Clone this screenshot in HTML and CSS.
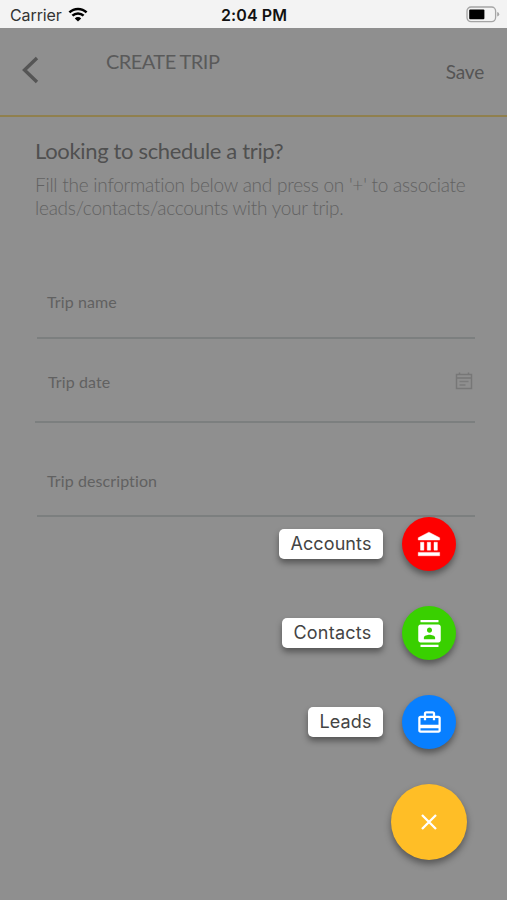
FILE: index.html
```html
<!DOCTYPE html>
<html lang="en">
<head>
<meta charset="utf-8">
<title>Create Trip</title>
<link rel="stylesheet" href="styles.css">
</head>
<body>
<div class="screen">
  <div class="status">
    <div class="carrier"><span class="carrier-name">Carrier</span>
      <svg class="wifi" viewBox="0 0 20 15"><path d="M1.4 5.4A12.4 12.4 0 0 1 18.6 5.4M4.4 8.7A8 8 0 0 1 15.6 8.7" fill="none" stroke="#000" stroke-width="2.5"/><path d="M10 14.5 6.8 11.4a4.6 4.6 0 0 1 6.4 0z"/></svg>
    </div>
    <span class="time">2:04 PM</span>
    <svg class="battery" viewBox="0 0 34 17"><rect x="1" y="1" width="28.6" height="14.6" rx="4" fill="none" stroke="#a5a5a5" stroke-width="1.3"/><rect x="3.2" y="3.4" width="15.2" height="9.8" rx="1" fill="#000"/><path d="M31.2 6v4.6q2-.6 2-2.3t-2-2.3" fill="#a5a5a5"/></svg>
  </div>
  <header class="header">
    <svg class="back" viewBox="0 0 18 28"><path d="M16 2 3.500 14 16 26" fill="none" stroke="#555" stroke-width="3.400"/></svg>
    <h1 class="title">CREATE TRIP</h1>
    <span class="save">Save</span>
  </header>
  <main class="content">
    <h2 class="question">Looking to schedule a trip?</h2>
    <p class="hint">Fill the information below and press on '+' to associate<br>leads/contacts/accounts with your trip.</p>
    <div class="field name"><span>Trip name</span></div>
    <div class="field date"><span>Trip date</span>
      <svg class="calendar" viewBox="0 0 18 18"><path d="M1.500 2.500h15v14h-15zM1.500 6h15M4.500 .5v2M13.500 .5v2" fill="none" stroke="#777" stroke-width="1.500"/><path d="M4.500 9.500h9M4.500 13h6" stroke="#7b7b7b" stroke-width="1.300"/></svg>
    </div>
    <div class="field description"><span>Trip description</span></div>
  </main>
  <div class="actions">
    <div class="action"><span class="label accounts">Accounts</span><span class="round red"><svg viewBox="0 0 24 24"><path d="M4 10v7h3v-7H4zm6 0v7h3v-7h-3zM2 22h19v-3H2v3zm14-12v7h3v-7h-3zm-4.500-9L2 6v2h19V6l-9.500-5z" stroke="#fff" stroke-width=".4"/></svg></span></div>
    <div class="action"><span class="label contacts">Contacts</span><span class="round green"><svg viewBox="0 0 24 24"><path d="M20 0H4v2h16V0zM4 24h16v-2H4v2zM20 4H4c-1.100 0-2 .9-2 2v12c0 1.100.9 2 2 2h16c1.100 0 2-.9 2-2V6c0-1.100-.9-2-2-2zm-8 2.750c1.240 0 2.250 1.010 2.250 2.250s-1.010 2.250-2.250 2.250S9.750 10.240 9.750 9 10.760 6.750 12 6.750zM17 17H7v-1.500c0-1.670 3.330-2.500 5-2.500s5 .83 5 2.500V17z"/></svg></span></div>
    <div class="action"><span class="label leads">Leads</span><span class="round blue"><svg viewBox="0 0 24 24"><path d="M20 6h-3V4c0-1.110-.89-2-2-2H9c-1.110 0-2 .89-2 2v2H4c-1.110 0-2 .89-2 2v11c0 1.110.89 2 2 2h16c1.110 0 2-.89 2-2V8c0-1.110-.89-2-2-2zM9 4h6v2H9V4zm11 15H4v-2h16v2zm0-5H4V8h3v2h2V8h6v2h2V8h3v6z"/></svg></span></div>
    <div class="close"><svg viewBox="0 0 18 18"><path d="M2 2l14 14M16 2 2 16" fill="none" stroke="#fff" stroke-width="2.300"/></svg></div>
  </div>
</div>
</body>
</html>
```

FILE: styles.css
```css
* { box-sizing: border-box; }
body { margin: 0; }
svg { display: block; }
.screen {
  position: relative;
  width: 507px;
  height: 900px;
  overflow: hidden;
  background: #8f8f8f;
  font-family: Lato, sans-serif;
  font-variant-ligatures: none;
}
.status {
  display: grid;
  grid-template-columns: 1fr auto 1fr;
  align-items: center;
  height: 28px;
  padding: 0 7px 0 10px;
  background: #f3f3f3;
  color: #111;
  font-family: Inter, sans-serif;
  font-size: 16px;
}
.carrier { display: flex; align-items: center; gap: 6px; color: #333; }
.carrier-name { letter-spacing: -0.1px; padding-top: 1px; }
.wifi { width: 20px; height: 15px; }
.time { padding-top: 1px; margin-right: 2px; font-weight: 600; letter-spacing: 0.1px; }
.battery { width: 34px; height: 17px; justify-self: end; }
.header {
  display: flex;
  align-items: flex-start;
  height: 89px;
  padding: 0 23px 0 21px;
  border-bottom: 2px solid #90804e;
}
.back { width: 18px; height: 28px; margin-top: 28px; }
.title {
  margin: 20px auto 0 67px;
  color: #5a5a5a;
  font-size: 20px;
  font-weight: 400;
  letter-spacing: -0.55px;
  line-height: 26px;
}
.save { margin-top: 31px; color: #555; font-size: 19px; letter-spacing: -0.2px; line-height: 26px; }
.content { padding: 19px 32px 0 35px; }
.question {
  margin: 0;
  color: #505050;
  font-size: 22px;
  font-weight: 400;
  letter-spacing: -0.34px;
  line-height: 30px;
}
.hint {
  margin: 7px 0 0;
  color: #626262;
  font-size: 19px;
  font-weight: 300;
  letter-spacing: -0.24px;
  line-height: 23px;
  white-space: nowrap;
}
.field {
  display: flex;
  align-items: flex-start;
  justify-content: space-between;
  border-bottom: 2px solid #7c7f7f;
  color: #616161;
  font-size: 16px;
  letter-spacing: 0.1px;
  line-height: 20px;
}
.name { height: 47px; margin: 73px 0 0 2px; padding-left: 10px; }
.date { height: 51px; margin-top: 33px; padding-left: 13px; }
.calendar { width: 18px; height: 18px; margin-right: 2px; }
.description { height: 46px; margin: 48px 0 0 2px; padding-left: 10px; }
.actions {
  position: absolute;
  top: 517px;
  right: 40px;
  display: flex;
  flex-direction: column;
  align-items: flex-end;
  gap: 35px;
}
.action { display: flex; align-items: center; gap: 19px; margin-right: 11px; }
.label {
  height: 30px;
  border-radius: 5px;
  background: #fff;
  box-shadow: 0 4px 6px rgba(0, 0, 0, 0.4);
  color: #444;
  font-family: Inter, sans-serif;
  font-size: 18px;
  letter-spacing: 0.1px;
  line-height: 29px;
  text-align: center;
}
.accounts { width: 104px; }
.contacts { width: 101px; letter-spacing: 0.25px; }
.leads { width: 75px; }
.round {
  display: flex;
  align-items: center;
  justify-content: center;
  width: 54px;
  height: 54px;
  border-radius: 50%;
  box-shadow: 0 4px 6px rgba(0, 0, 0, 0.4);
}
.round svg { width: 27px; height: 27px; fill: #fff; }
.red { background: #fe0000; }
.green { background: #39d000; }
.blue { background: #087fff; }
.close {
  display: flex;
  align-items: center;
  justify-content: center;
  width: 76px;
  height: 76px;
  border-radius: 50%;
  background: #ffbe26;
  box-shadow: 0 4px 7px rgba(0, 0, 0, 0.4);
}
.close svg { width: 18px; height: 18px; }
```
